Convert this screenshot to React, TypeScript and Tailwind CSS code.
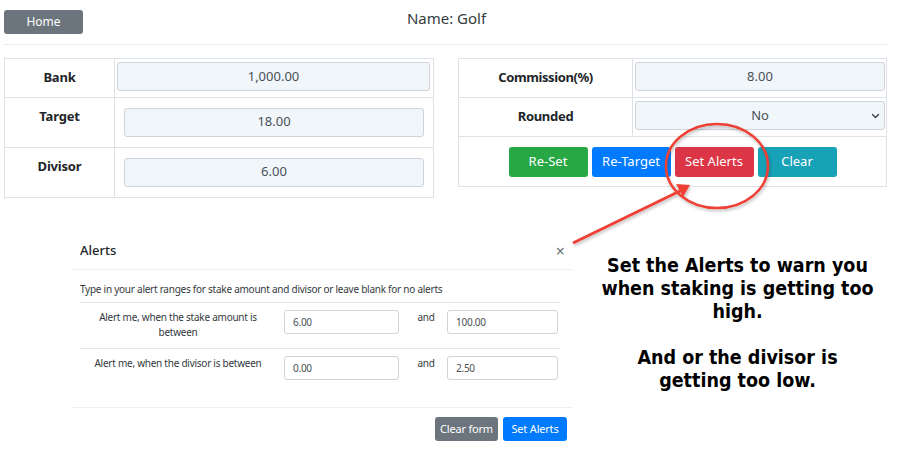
export default function App() {
  const ui = { fontFamily: '"Noto Sans", "Open Sans", sans-serif' };
  return (
    <div className="relative w-[900px] h-[450px] bg-white overflow-hidden text-[#212529]" style={ui}>
      {/* header */}
      <div className="flex items-center h-[38px] px-1 pt-[6px]">
        <button className="w-[79px] h-[24px] rounded-[3px] bg-[#6c757d] text-white text-[12px]">Home</button>
        <div className="flex-1 text-center text-[15px] text-[#343a40] pr-[86px] -mt-[7px]">Name: Golf</div>
      </div>
      <div className="ml-1 mr-[13px] mt-[6px] border-t border-[#e9ecef]" />

      {/* tables */}
      <div className="flex gap-6 mt-[13px] ml-1">
        <table className="w-[430px] border-collapse border border-[#dee2e6] text-[13px]">
          <tbody>
            <tr className="h-[39px]">
              <td className="w-[110px] border border-[#dee2e6] text-center font-bold tracking-[-0.2px]">Bank</td>
              <td className="border border-[#dee2e6] pl-[2px] pr-[3px] py-[3px] pb-[6px]">
                <div className="h-[29px] rounded-[3px] border border-[#ced4da] bg-[#f1f6fb] flex items-center justify-center text-[#495057]">1,000.00</div>
              </td>
            </tr>
            <tr className="h-[50px]">
              <td className="border border-[#dee2e6] text-center font-bold align-top pt-[9px] tracking-[-0.2px]">Target</td>
              <td className="border border-[#dee2e6] px-[9px] pt-[9px] pb-[10px]">
                <div className="h-[29px] rounded-[3px] border border-[#ced4da] bg-[#f1f6fb] flex items-center justify-center text-[#495057]">18.00</div>
              </td>
            </tr>
            <tr className="h-[50px]">
              <td className="border border-[#dee2e6] text-center font-bold align-top pt-[9px] tracking-[-0.2px]">Divisor</td>
              <td className="border border-[#dee2e6] px-[9px] pt-[9px] pb-[10px]">
                <div className="h-[29px] rounded-[3px] border border-[#ced4da] bg-[#f1f6fb] flex items-center justify-center text-[#495057]">6.00</div>
              </td>
            </tr>
          </tbody>
        </table>

        <table className="w-[429px] h-[128px] border-collapse border border-[#dee2e6] text-[13px]">
          <tbody>
            <tr className="h-[39px]">
              <td className="w-[174px] border border-[#dee2e6] text-center font-bold tracking-[-0.4px]">Commission(%)</td>
              <td className="border border-[#dee2e6] pl-[2px] pr-[1px] pt-[3px] pb-[6px]">
                <div className="h-[29px] rounded-[3px] border border-[#ced4da] bg-[#f1f6fb] flex items-center justify-center text-[#495057]">8.00</div>
              </td>
            </tr>
            <tr className="h-[39px]">
              <td className="border border-[#dee2e6] text-center font-bold tracking-[-0.3px]">Rounded</td>
              <td className="border border-[#dee2e6] pl-[2px] pr-[1px] pt-[3px] pb-[6px]">
                <div className="relative h-[29px] rounded-[3px] border border-[#ced4da] bg-[#f1f6fb] flex items-center justify-center text-[#495057]">
                  No
                  <svg className="absolute right-[4px] top-[10px]" width="9" height="8" viewBox="0 0 16 16">
                    <path d="M2 5l6 6 6-6" fill="none" stroke="#343a40" strokeWidth="2.5" strokeLinecap="round" strokeLinejoin="round" />
                  </svg>
                </div>
              </td>
            </tr>
            <tr className="h-[50px]">
              <td colSpan={2} className="border border-[#dee2e6]">
                <div className="flex justify-center gap-[4px] text-white text-[13px]">
                  <button className="w-[79px] h-[30px] rounded-[3px] bg-[#28a745]">Re-Set</button>
                  <button className="w-[79px] h-[30px] rounded-[3px] bg-[#007bff]">Re-Target</button>
                  <button className="w-[79px] h-[30px] rounded-[3px] bg-[#dc3545]">Set Alerts</button>
                  <button className="w-[79px] h-[30px] rounded-[3px] bg-[#17a2b8]">Clear</button>
                </div>
              </td>
            </tr>
          </tbody>
        </table>
      </div>

      {/* modal + note */}
      <div className="flex mt-[34px]">
        <div className="ml-[72px] w-[501px] bg-white">
          <div className="flex items-center justify-between h-[38px] pl-2 pr-[8px] border-b border-[#eef0f2]">
            <span className="text-[13px] font-medium text-[#212529]">Alerts</span>
            <span className="text-[16px] text-[#6c757d] leading-none">×</span>
          </div>
          <div className="px-2 pt-[12px] text-[10px] tracking-[-0.25px] text-[#343a40]">
            <div className="h-[20px]">Type in your alert ranges for stake amount and divisor or leave blank for no alerts</div>
            <div className="w-[480px]">
              <div className="flex h-[46px] border-t border-[#e6e9ec]">
                <div className="w-[196px] text-center pt-[7px] leading-[15px] px-[14px]">Alert me, when the stake amount is between</div>
                <div className="pl-[8px] pt-[7px]">
                  <div className="w-[115px] h-[24px] rounded-[3px] border border-[#ced4da] flex items-center pl-[8px] text-[#495057]">6.00</div>
                </div>
                <div className="w-[48px] text-center pt-[7px] pl-[6px]">and</div>
                <div className="pt-[7px]">
                  <div className="w-[111px] h-[24px] rounded-[3px] border border-[#ced4da] flex items-center pl-[8px] text-[#495057]">100.00</div>
                </div>
              </div>
              <div className="flex h-[46px] border-t border-[#e6e9ec]">
                <div className="w-[196px] text-center pt-[7px] leading-[15px]">Alert me, when the divisor is between</div>
                <div className="pl-[8px] pt-[7px]">
                  <div className="w-[115px] h-[24px] rounded-[3px] border border-[#ced4da] flex items-center pl-[8px] text-[#495057]">0.00</div>
                </div>
                <div className="w-[48px] text-center pt-[7px] pl-[6px]">and</div>
                <div className="pt-[7px]">
                  <div className="w-[111px] h-[24px] rounded-[3px] border border-[#ced4da] flex items-center pl-[8px] text-[#495057]">2.50</div>
                </div>
              </div>
            </div>
          </div>
          <div className="mt-[13px] border-t border-[#eef0f2] flex justify-end gap-[5px] pr-[6px] pt-[9px]">
            <button className="w-[63px] h-[24px] rounded-[3px] bg-[#6c757d] text-white text-[11px] tracking-[-0.2px]">Clear form</button>
            <button className="w-[64px] h-[24px] rounded-[3px] bg-[#007bff] text-white text-[11px] tracking-[-0.2px]">Set Alerts</button>
          </div>
        </div>

        <div
          className="ml-[27px] mt-[22px] w-[275px] text-center font-bold text-[19.5px] leading-[23px] text-black"
          style={{ fontFamily: '"DejaVu Sans Condensed", "DejaVu Sans", sans-serif' }}
        >
          <p>Set the Alerts to warn you when staking is getting too high.</p>
          <p className="mt-[23px]">And or the divisor is getting too low.</p>
        </div>
      </div>

      {/* annotation overlay */}
      <svg className="absolute left-0 top-0 pointer-events-none" width="900" height="450">
        <defs>
          <filter id="sh" x="-20%" y="-20%" width="140%" height="140%">
            <feDropShadow dx="1" dy="2" stdDeviation="1.5" floodColor="#000" floodOpacity="0.25" />
          </filter>
        </defs>
        <g filter="url(#sh)" stroke="#ee4036" fill="none" strokeWidth="2.5">
          <ellipse cx="717" cy="166" rx="51" ry="42" />
          <line x1="573" y1="243" x2="682" y2="190" strokeWidth="3" />
          <polygon points="690,185 676,184 683,197" fill="#ee4036" stroke="none" />
        </g>
      </svg>
    </div>
  );
}
